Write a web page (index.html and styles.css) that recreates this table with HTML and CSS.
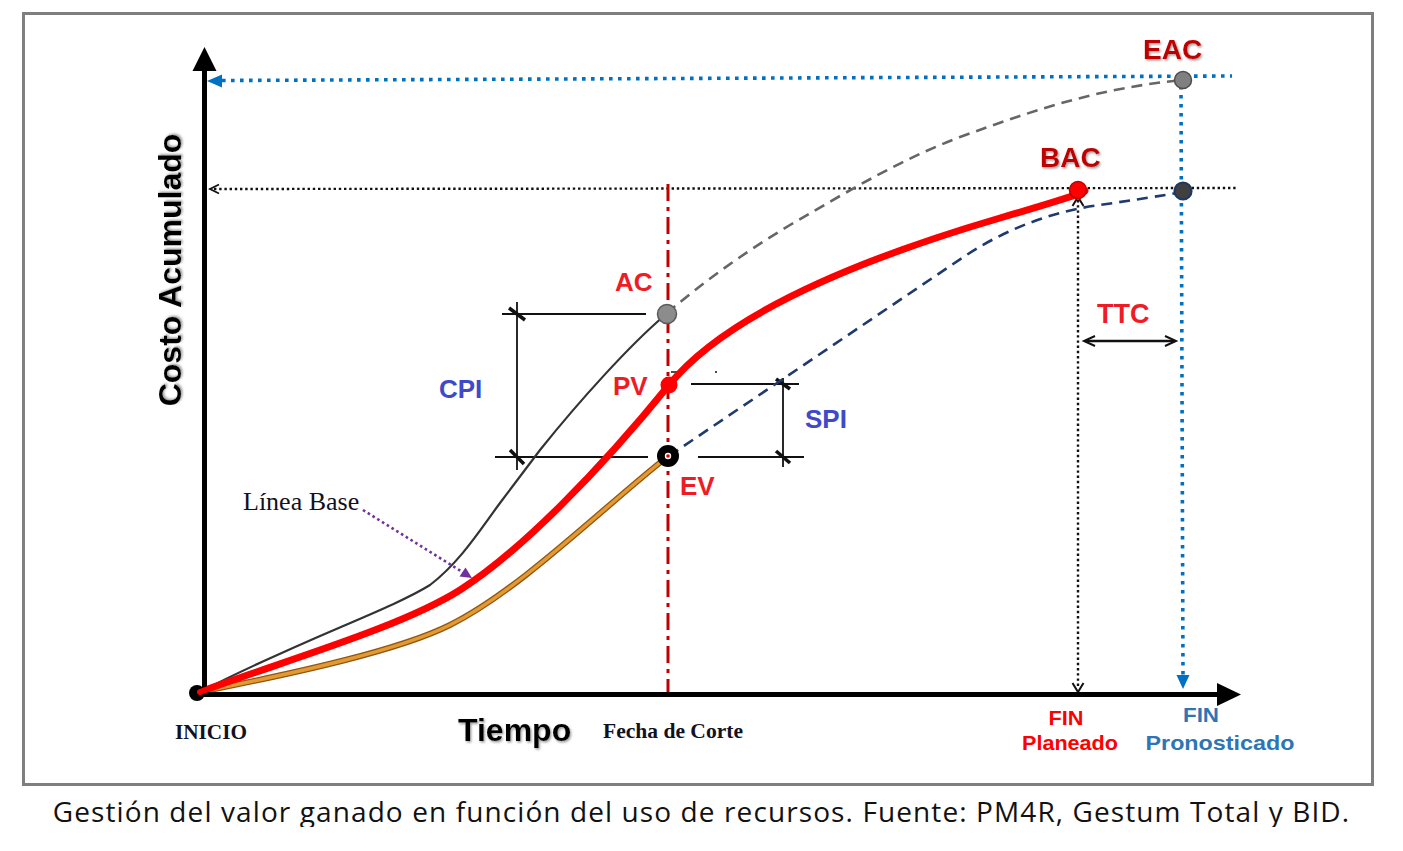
FILE: index.html
```html
<!DOCTYPE html>
<html lang="es">
<head>
<meta charset="utf-8">
<title>Gestión del valor ganado</title>
<link rel="stylesheet" href="styles.css">
</head>
<body>
<div class="page">
  <figure class="figure">
    <svg class="chart" width="1346" height="768" viewBox="25 15 1346 768" xmlns="http://www.w3.org/2000/svg">
      <defs>
        <filter id="shadow" x="-10%" y="-20%" width="130%" height="150%">
          <feDropShadow dx="1.2" dy="1.5" stdDeviation="0.9" flood-color="#7a7a7a" flood-opacity="0.75"/>
        </filter>
      </defs>

      <!-- blue dotted EAC level -->
      <line x1="222" y1="80.5" x2="1232" y2="76" stroke="#0070C0" stroke-width="3.6" stroke-dasharray="3.6 5.4"/>
      <polygon points="207,81 222,74.5 222,87.5" fill="#0070C0"/>
      <!-- black dotted BAC level -->
      <line x1="214" y1="189" x2="1238" y2="188" stroke="#111" stroke-width="2.4" stroke-dasharray="2.4 2.8"/>
      <polyline points="219,184.5 210,189 219,193.5" fill="none" stroke="#111" stroke-width="1.8"/>

      <!-- blue dotted vertical (pronosticado) -->
      <line x1="1181" y1="86" x2="1183" y2="678" stroke="#0070C0" stroke-width="3.6" stroke-dasharray="3.6 5.4"/>
      <polygon points="1183,689 1176.5,675 1189.5,675" fill="#0070C0"/>
      <!-- black dotted vertical (planeado) -->
      <line x1="1078" y1="200" x2="1078" y2="688" stroke="#111" stroke-width="2.4" stroke-dasharray="2.4 2.8"/>
      <polyline points="1072.5,206 1078,197 1083.5,206" fill="none" stroke="#111" stroke-width="2"/>
      <polyline points="1072.5,683 1078,692 1083.5,683" fill="none" stroke="#111" stroke-width="2"/>

      <!-- TTC double arrow -->
      <line x1="1085" y1="341" x2="1175" y2="341" stroke="#111" stroke-width="2.4"/>
      <polyline points="1095,336 1084,341 1095,346" fill="none" stroke="#111" stroke-width="2"/>
      <polyline points="1165,336 1176,341 1165,346" fill="none" stroke="#111" stroke-width="2"/>

      <!-- fecha de corte -->
      <line x1="668" y1="184" x2="668" y2="702" stroke="#C00000" stroke-width="3" stroke-dasharray="17 6 4 6"/>

      <!-- CPI dimension -->
      <line x1="502" y1="314" x2="646" y2="314" stroke="#111" stroke-width="1.8"/>
      <line x1="495" y1="457" x2="648" y2="457" stroke="#111" stroke-width="1.8"/>
      <line x1="517" y1="302" x2="517" y2="470" stroke="#111" stroke-width="1.8"/>
      <line x1="509" y1="308" x2="525" y2="320" stroke="#111" stroke-width="3.6"/>
      <line x1="510" y1="450" x2="524" y2="464" stroke="#111" stroke-width="3.6"/>
      <!-- SPI dimension -->
      <line x1="691" y1="384" x2="799" y2="384" stroke="#111" stroke-width="1.8"/>
      <line x1="698" y1="457" x2="804" y2="457" stroke="#111" stroke-width="1.8"/>
      <line x1="783" y1="378" x2="783" y2="467" stroke="#111" stroke-width="1.8"/>
      <line x1="776" y1="379" x2="790" y2="389" stroke="#111" stroke-width="3.6"/>
      <line x1="776" y1="451" x2="790" y2="463" stroke="#111" stroke-width="3.6"/>
      <line x1="671" y1="372" x2="680" y2="372" stroke="#111" stroke-width="1.5"/>
      <circle cx="716" cy="372" r="1" fill="#111"/>

      <!-- forecast curves -->
      <path d="M667,313 C700,285 740,255 790,225 C850,190 900,160 960,137 C1040,108 1100,88 1183,80" fill="none" stroke="#666" stroke-width="2.6" stroke-dasharray="11 7"/>
      <path d="M669,456 L965,256 C1010,226 1060,210 1100,205 C1140,199 1160,196 1183,192" fill="none" stroke="#1F3A6E" stroke-width="2.6" stroke-dasharray="11 7"/>

      <!-- AC actual cost -->
      <path d="M200,692 C300,640 390,610 430,585 C460,562 480,530 500,503 L540,450 C580,400 630,345 664,316" fill="none" stroke="#333" stroke-width="2.2"/>
      <!-- EV curve -->
      <path d="M205,691 C300,672 400,650 450,625 C520,590 600,510 667,457" fill="none" stroke="#93560f" stroke-width="6"/>
      <path d="M205,691 C300,672 400,650 450,625 C520,590 600,510 667,457" fill="none" stroke="#E39A35" stroke-width="3.4"/>
      <!-- PV baseline -->
      <path d="M200,692 C280,662 400,628 460,590 C520,552 600,470 669,385 C725,316 850,262 1000,218 S1050,198 1078,190" fill="none" stroke="#FF0000" stroke-width="7" stroke-linecap="round"/>

      <!-- Línea base pointer -->
      <line x1="363" y1="510" x2="464" y2="573" stroke="#7030A0" stroke-width="2.6" stroke-dasharray="2.6 3"/>
      <polygon points="472,578 459.5,576.5 465.5,567.5" fill="#7030A0"/>

      <!-- points -->
      <circle cx="1183" cy="80" r="8.5" fill="#808080" stroke="#4d4d4d" stroke-width="1.5"/>
      <circle cx="1183" cy="191" r="8.5" fill="#404040" stroke="#1F3864" stroke-width="2.2"/>
      <circle cx="1078" cy="190" r="8.5" fill="#FF0000" stroke="#C00000" stroke-width="1.5"/>
      <circle cx="667" cy="314" r="9.5" fill="#8c8c8c" stroke="#5a5a5a" stroke-width="1.5"/>
      <circle cx="669" cy="385" r="8.5" fill="#FF0000"/>
      <circle cx="668" cy="456" r="11" fill="#000"/>
      <circle cx="668" cy="456" r="3.2" fill="#fff"/>
      <circle cx="668" cy="456" r="1.8" fill="#E00000"/>

      <!-- axes -->
      <line x1="204.5" y1="66" x2="204.5" y2="697" stroke="#000" stroke-width="5"/>
      <polygon points="204.5,47 192.5,71 216.5,71" fill="#000"/>
      <line x1="198" y1="694.5" x2="1222" y2="694.5" stroke="#000" stroke-width="5"/>
      <polygon points="1241,694.5 1217,683 1217,706" fill="#000"/>
      <circle cx="197" cy="693" r="8" fill="#000"/>
      <path d="M200,692 L216,686" stroke="#FF0000" stroke-width="6" stroke-linecap="round"/>

      <!-- labels -->
      <text class="lbl dark" x="1143" y="59" filter="url(#shadow)">EAC</text>
      <text class="lbl dark" x="1040" y="167" filter="url(#shadow)">BAC</text>
      <text class="lbl red ttc" x="1097" y="323">TTC</text>
      <text class="lbl red mid" x="615" y="291">AC</text>
      <text class="lbl red mid" x="613" y="395">PV</text>
      <text class="lbl red mid" x="680" y="495">EV</text>
      <text class="lbl blue mid" x="439" y="398">CPI</text>
      <text class="lbl blue mid" x="805" y="428">SPI</text>

      <text class="serif base" x="243" y="510">Línea Base</text>
      <text class="serif bold small" x="175" y="739" textLength="72" lengthAdjust="spacingAndGlyphs">INICIO</text>
      <text class="serif bold small" x="603" y="738" textLength="140" lengthAdjust="spacingAndGlyphs">Fecha de Corte</text>
      <text class="axis-title" x="458" y="741" filter="url(#shadow)">Tiempo</text>
      <text class="axis-title" transform="translate(181,270) rotate(-90)" text-anchor="middle" filter="url(#shadow)">Costo Acumulado</text>

      <text class="fin redfin" x="1066" y="725" text-anchor="middle" textLength="35" lengthAdjust="spacingAndGlyphs">FIN</text>
      <text class="fin redfin" x="1070" y="750" text-anchor="middle" textLength="96" lengthAdjust="spacingAndGlyphs">Planeado</text>
      <text class="fin bluefin" x="1201" y="722" text-anchor="middle" textLength="36" lengthAdjust="spacingAndGlyphs">FIN</text>
      <text class="fin bluefin" x="1220" y="750" text-anchor="middle" textLength="149" lengthAdjust="spacingAndGlyphs">Pronosticado</text>
    </svg>
  </figure>
  <p class="caption">Gestión del valor ganado en función del uso de recursos. Fuente: PM4R, Gestum Total y BID.</p>
</div>
</body>
</html>
```

FILE: styles.css
```css
html, body {
  margin: 0;
  padding: 0;
  background: #ffffff;
}

.page {
  padding-top: 12px;
}

.figure {
  margin: 0 0 0 22px;
  width: 1346px;
  height: 768px;
  border: 3px solid #7f7f7f;
  background: #ffffff;
}

.chart {
  display: block;
}

.lbl {
  font-family: "Liberation Sans", Arial, sans-serif;
  font-weight: 700;
  font-size: 28px;
}

.lbl.mid {
  font-size: 26px;
}

.lbl.ttc {
  font-size: 27px;
}

.dark {
  fill: #C00000;
}

.red {
  fill: #EE1C25;
}

.blue {
  fill: #3E4AC8;
}

.serif {
  font-family: "Liberation Serif", "Times New Roman", serif;
  fill: #111122;
}

.serif.base {
  font-size: 26px;
}

.serif.bold {
  font-weight: 700;
}

.serif.small {
  font-size: 21px;
}

.axis-title {
  font-family: "Liberation Sans", Arial, sans-serif;
  font-weight: 700;
  font-size: 32px;
  fill: #000;
}

.fin {
  font-family: "Liberation Sans", Arial, sans-serif;
  font-weight: 700;
  font-size: 21px;
}

.redfin {
  fill: #FF0000;
}

.bluefin {
  fill: #2E75B6;
}

.caption {
  margin: 9px 0 0 0;
  text-align: center;
  font-family: "Open Sans", "Noto Sans", sans-serif;
  font-size: 28px;
  line-height: 32px;
  letter-spacing: 1.1px;
  color: #111111;
}
```
